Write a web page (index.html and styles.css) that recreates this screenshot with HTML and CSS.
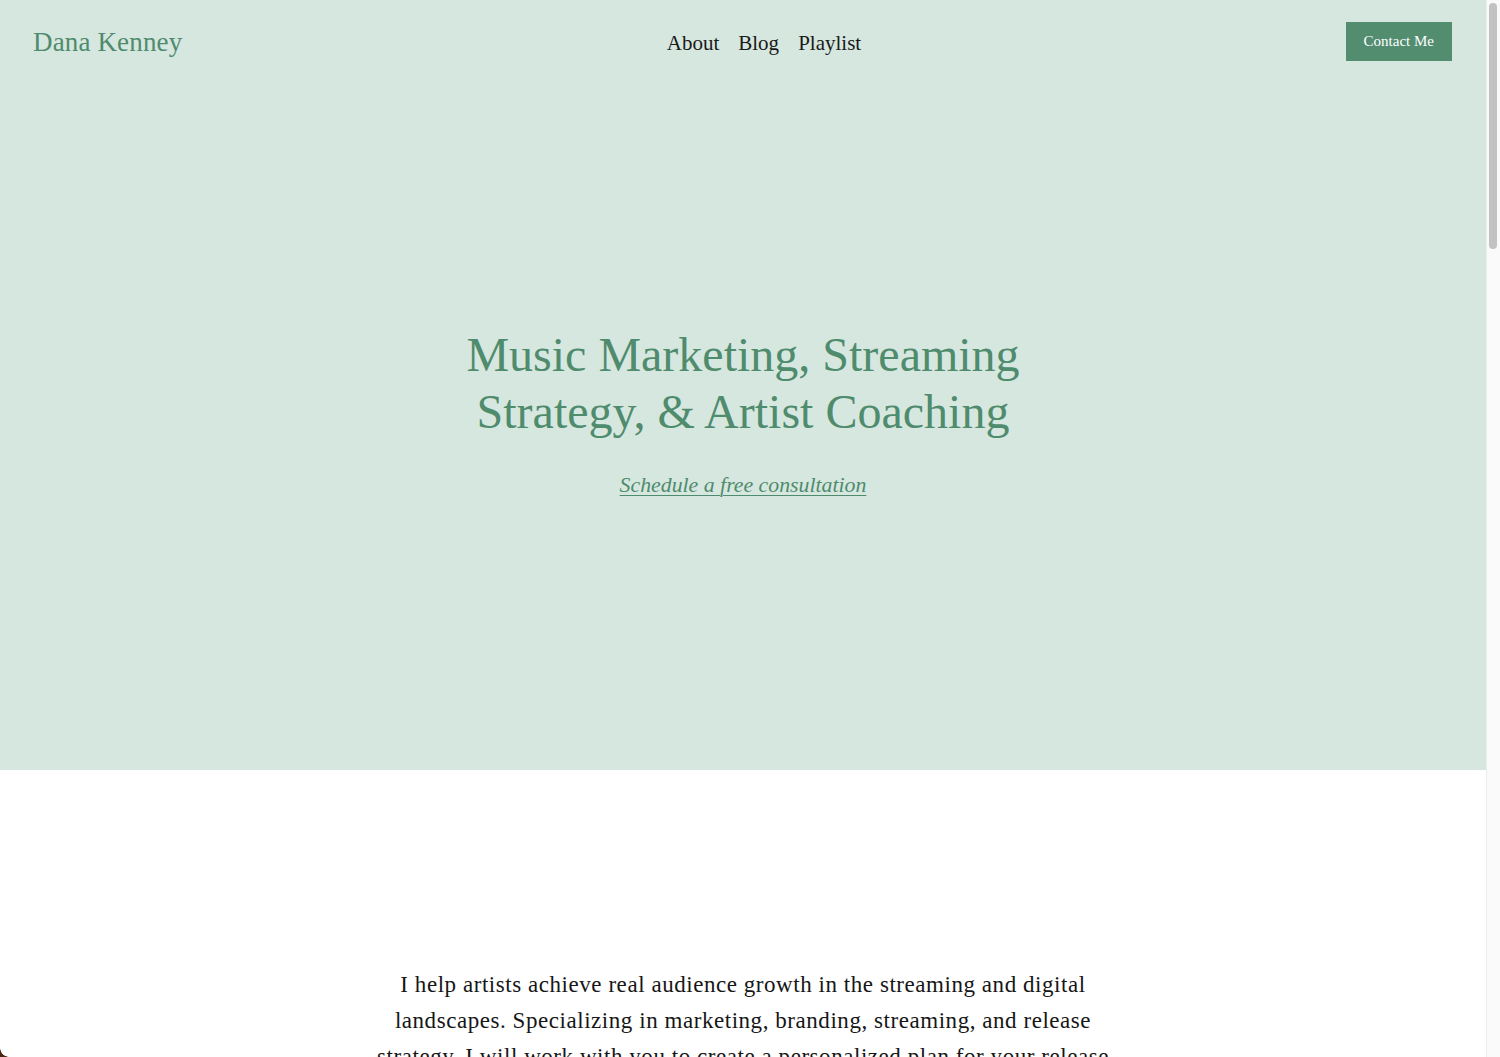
FILE: index.html
```html
<!DOCTYPE html>
<html lang="en">
<head>
<meta charset="utf-8">
<title>Dana Kenney</title>
<link rel="stylesheet" href="styles.css">
</head>
<body>
<div class="window">
  <div class="page">
    <section class="hero">
      <header class="header">
        <a class="logo" href="#">Dana Kenney</a>
        <nav class="nav">
          <a href="#">About</a>
          <a href="#">Blog</a>
          <a href="#">Playlist</a>
        </nav>
        <a class="btn" href="#">Contact Me</a>
      </header>
      <div class="hero-body">
        <h1 class="hero-title">Music Marketing, Streaming<br>Strategy, &amp; Artist Coaching</h1>
        <a class="hero-link" href="#">Schedule a free consultation</a>
      </div>
    </section>
    <section class="intro">
      <p class="intro-text">I help artists achieve real audience growth in the streaming and digital landscapes. Specializing in marketing, branding, streaming, and release strategy. I will work with you to create a personalized plan for your release and help you grow your audience.</p>
    </section>
  </div>
  <div class="scrollbar"><div class="thumb"></div></div>
  <div class="corner"></div>
</div>
</body>
</html>
```

FILE: styles.css
```css
html, body {
  margin: 0;
  padding: 0;
  height: 1057px;
  overflow: hidden;
  background: #ffffff;
}
body {
  font-family: "Liberation Serif", "Times New Roman", serif;
  color: #1b1b1b;
}
a { text-decoration: none; color: inherit; }

.window {
  display: flex;
  height: 1057px;
  position: relative;
}
.page {
  width: 1486px;
  flex: none;
  height: 1057px;
  overflow: hidden;
}

.hero {
  background: #d6e7df;
  height: 770px;
  display: flex;
  flex-direction: column;
}
.header {
  height: 83px;
  display: flex;
  align-items: center;
  justify-content: space-between;
  padding: 0 34px 0 33px;
  flex: none;
}
.logo {
  font-size: 27px;
  letter-spacing: 0.15px;
  color: #4f8b6d;
  line-height: 1;
  margin-top: 2px;
}
.nav {
  display: flex;
  gap: 19px;
  font-size: 21px;
  color: #1a1a1a;
  margin-top: 4px;
}
.btn {
  background: #528d70;
  color: #ffffff;
  font-size: 15px;
  height: 39px;
  display: flex;
  align-items: center;
  padding: 0 18px;
  margin-top: -1px;
}

.hero-body {
  display: flex;
  flex-direction: column;
  align-items: center;
  padding-top: 243px;
  text-align: center;
}
.hero-title {
  margin: 0;
  font-weight: normal;
  font-size: 48px;
  line-height: 57px;
  color: #4f8b6d;
}
.hero-link {
  margin-top: 31px;
  font-size: 21.8px;
  line-height: 28px;
  font-style: italic;
  color: #4f8b6d;
  text-decoration: underline;
  text-underline-offset: 3px;
  text-decoration-thickness: 1px;
}

.intro {
  display: flex;
  justify-content: center;
  padding-top: 197px;
}
.intro-text {
  margin: 0;
  width: 740px;
  text-align: center;
  font-size: 23px;
  letter-spacing: 0.55px;
  line-height: 36px;
  color: #161616;
}

.scrollbar {
  width: 14px;
  flex: none;
  background: #fafafa;
  border-left: 1px solid #ececec;
  box-sizing: border-box;
  padding: 3px 2px 0 2px;
}
.thumb {
  width: 8px;
  height: 246px;
  border-radius: 4px;
  background: #c2c2c2;
}
.corner {
  position: absolute;
  left: 0;
  bottom: 0;
  width: 9px;
  height: 9px;
  background: radial-gradient(circle at 9px 0, transparent 8.5px, #4a2a12 9px);
}
```
